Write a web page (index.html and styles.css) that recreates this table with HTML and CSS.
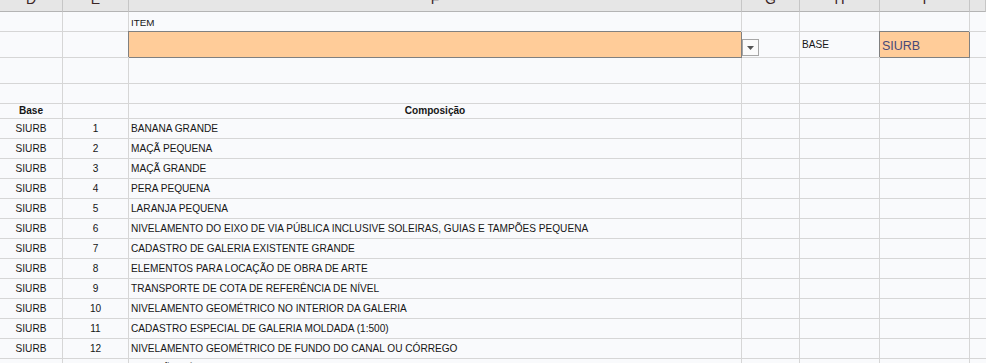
FILE: index.html
```html
<!DOCTYPE html>
<html lang="pt-BR">
<head>
<meta charset="utf-8">
<title>Planilha</title>
<link rel="stylesheet" href="styles.css">
</head>
<body>
<div class="sheet">
  <div class="row colhead">
    <div class="hc"><span>D</span></div>
    <div class="hc"><span>E</span></div>
    <div class="hc"><span>F</span></div>
    <div class="hc"><span>G</span></div>
    <div class="hc"><span>H</span></div>
    <div class="hc"><span>I</span></div>
    <div class="hc last"></div>
  </div>

  <div class="row r20">
    <div class="c"></div><div class="c"></div>
    <div class="c small">ITEM</div>
    <div class="c"></div><div class="c"></div><div class="c"></div><div class="c last"></div>
  </div>

  <div class="row r26">
    <div class="c"></div><div class="c"></div>
    <div class="c input"></div>
    <div class="c ddcell"><span class="dd"><svg width="7" height="4" viewBox="0 0 7 4"><path d="M0 0h7L3.5 4z" fill="#555"/></svg></span></div>
    <div class="c">BASE</div>
    <div class="c input siurb">SIURB</div>
    <div class="c last"></div>
  </div>

  <div class="row r26">
    <div class="c"></div><div class="c"></div><div class="c"></div><div class="c"></div><div class="c"></div><div class="c"></div><div class="c last"></div>
  </div>

  <div class="row r20">
    <div class="c"></div><div class="c"></div><div class="c"></div><div class="c"></div><div class="c"></div><div class="c"></div><div class="c last"></div>
  </div>

  <div class="row r15 bold">
    <div class="c center">Base</div>
    <div class="c"></div>
    <div class="c center">Composição</div>
    <div class="c"></div><div class="c"></div><div class="c"></div><div class="c last"></div>
  </div>

  <div class="row r20"><div class="c center">SIURB</div><div class="c center">1</div><div class="c">BANANA GRANDE</div><div class="c"></div><div class="c"></div><div class="c"></div><div class="c last"></div></div>
  <div class="row r20"><div class="c center">SIURB</div><div class="c center">2</div><div class="c">MAÇÃ PEQUENA</div><div class="c"></div><div class="c"></div><div class="c"></div><div class="c last"></div></div>
  <div class="row r20"><div class="c center">SIURB</div><div class="c center">3</div><div class="c">MAÇÃ GRANDE</div><div class="c"></div><div class="c"></div><div class="c"></div><div class="c last"></div></div>
  <div class="row r20"><div class="c center">SIURB</div><div class="c center">4</div><div class="c">PERA PEQUENA</div><div class="c"></div><div class="c"></div><div class="c"></div><div class="c last"></div></div>
  <div class="row r20"><div class="c center">SIURB</div><div class="c center">5</div><div class="c">LARANJA PEQUENA</div><div class="c"></div><div class="c"></div><div class="c"></div><div class="c last"></div></div>
  <div class="row r20"><div class="c center">SIURB</div><div class="c center">6</div><div class="c">NIVELAMENTO DO EIXO DE VIA PÚBLICA INCLUSIVE SOLEIRAS, GUIAS E TAMPÕES PEQUENA</div><div class="c"></div><div class="c"></div><div class="c"></div><div class="c last"></div></div>
  <div class="row r20"><div class="c center">SIURB</div><div class="c center">7</div><div class="c">CADASTRO DE GALERIA EXISTENTE GRANDE</div><div class="c"></div><div class="c"></div><div class="c"></div><div class="c last"></div></div>
  <div class="row r20"><div class="c center">SIURB</div><div class="c center">8</div><div class="c">ELEMENTOS PARA LOCAÇÃO DE OBRA DE ARTE</div><div class="c"></div><div class="c"></div><div class="c"></div><div class="c last"></div></div>
  <div class="row r20"><div class="c center">SIURB</div><div class="c center">9</div><div class="c">TRANSPORTE DE COTA DE REFERÊNCIA DE NÍVEL</div><div class="c"></div><div class="c"></div><div class="c"></div><div class="c last"></div></div>
  <div class="row r20"><div class="c center">SIURB</div><div class="c center">10</div><div class="c">NIVELAMENTO GEOMÉTRICO NO INTERIOR DA GALERIA</div><div class="c"></div><div class="c"></div><div class="c"></div><div class="c last"></div></div>
  <div class="row r20"><div class="c center">SIURB</div><div class="c center">11</div><div class="c">CADASTRO ESPECIAL DE GALERIA MOLDADA (1:500)</div><div class="c"></div><div class="c"></div><div class="c"></div><div class="c last"></div></div>
  <div class="row r20"><div class="c center">SIURB</div><div class="c center">12</div><div class="c">NIVELAMENTO GEOMÉTRICO DE FUNDO DO CANAL OU CÓRREGO</div><div class="c"></div><div class="c"></div><div class="c"></div><div class="c last"></div></div>
  <div class="row r20"><div class="c center">SIURB</div><div class="c center">13</div><div class="c">MEDIÇÃO TÉCNICA DE GALERIA</div><div class="c"></div><div class="c"></div><div class="c"></div><div class="c last"></div></div>
</div>
</body>
</html>
```

FILE: styles.css
```css
html, body {
  margin: 0;
  padding: 0;
  background: #f9fafc;
  overflow: hidden;
}

.sheet {
  width: 986px;
  height: 363px;
  overflow: hidden;
  font-family: "Liberation Sans", Arial, sans-serif;
  font-size: 10.1px;
  color: #161616;
  background: #f9fafc;
}

.row {
  display: grid;
  grid-template-columns: 63px 66px 613px 58px 80px 90px 1fr;
}

.colhead {
  height: 12px;
  background: #e6e6e6;
}

.hc {
  box-sizing: border-box;
  height: 12px;
  border-right: 1px solid #c6c6c6;
  border-bottom: 1px solid #b4b4b4;
  overflow: hidden;
  text-align: center;
  font-size: 14px;
  color: #3a2424;
}

.hc span {
  display: block;
  line-height: 14px;
  margin-top: -8px;
}

.c {
  box-sizing: border-box;
  border-right: 1px solid #d6d6d6;
  border-bottom: 1px solid #d6d6d6;
  display: flex;
  align-items: center;
  padding: 0 2px 1px;
  white-space: nowrap;
  overflow: visible;
  min-width: 0;
}

.c.last {
  border-right: none;
}

.r20 .c { height: 20px; }
.r26 .c { height: 26px; }
.r15 .c { height: 15px; }

.center {
  justify-content: center;
}

.bold {
  font-weight: bold;
}

.small {
  font-size: 9.8px;
  padding-top: 1px;
  padding-bottom: 0;
}

.input {
  background: #ffcc99;
  border-right: 1px solid #808080;
  border-bottom: 1px solid #808080;
  box-shadow: -1px -1px 0 0 #808080;
}

.siurb {
  font-size: 12.5px;
  color: #484a78;
  padding-top: 2px;
  padding-bottom: 0;
}

.ddcell {
  align-items: flex-start;
  padding: 0;
}

.dd {
  box-sizing: border-box;
  width: 17px;
  height: 17px;
  margin-top: 7px;
  border: 1px solid #a6a6a6;
  background: #fbfbfb;
  display: flex;
  align-items: center;
  justify-content: center;
}
```
